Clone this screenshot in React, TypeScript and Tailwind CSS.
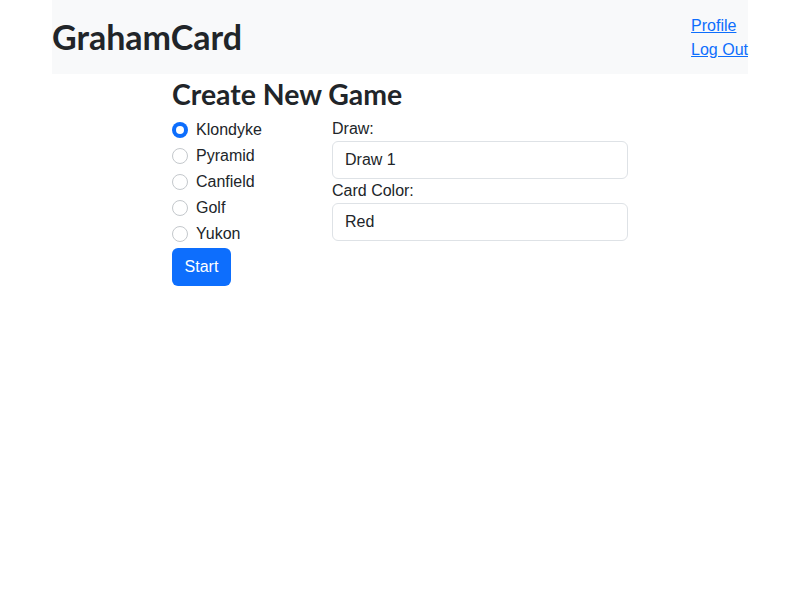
import React from "react";

const games = ["Klondyke", "Pyramid", "Canfield", "Golf", "Yukon"];

export default function App() {
  const [sel, setSel] = React.useState("Klondyke");
  return (
    <div className="min-h-[600px] bg-white text-[#212529] text-[16px] leading-6" style={{ fontFamily: '"Liberation Sans", Arial, sans-serif' }}>
      <header className="w-[696px] mx-auto h-[74px] bg-[#f8f9fa] flex items-center justify-between">
        <h1 className="m-0 text-[34px] leading-[41px] font-bold -mt-[2px]" style={{ fontFamily: 'Lato, "Liberation Sans", sans-serif' }}>GrahamCard</h1>
        <div className="flex flex-col items-start mt-[2px]">
          <a href="#" className="text-[#0d6efd] underline leading-6">Profile</a>
          <a href="#" className="text-[#0d6efd] underline leading-6">Log Out</a>
        </div>
      </header>
      <main className="pl-[172px] pt-[1px]">
        <h2 className="m-0 text-[28.4px] leading-[34px] font-bold pt-[2px] mb-[7px]" style={{ fontFamily: 'Lato, "Liberation Sans", sans-serif' }}>Create New Game</h2>
        <div className="flex">
          <div className="w-[160px] flex flex-col">
            {games.map((g) => (
              <label key={g} className="flex items-center h-6 mb-[2px] cursor-pointer" onClick={() => setSel(g)}>
                {sel === g ? (
                  <span className="w-4 h-4 rounded-full bg-[#0d6efd] flex items-center justify-center">
                    <span className="w-[8px] h-[8px] rounded-full bg-white" />
                  </span>
                ) : (
                  <span className="w-4 h-4 rounded-full border border-[#c4c8cc] bg-white" />
                )}
                <span className="ml-2">{g}</span>
              </label>
            ))}
            <button className="w-[59px] h-[38px] rounded-[6px] bg-[#0d6efd] text-white text-[16px]">Start</button>
          </div>
          <div className="w-[296px] flex flex-col -mt-[1px]">
            <div className="leading-6">Draw:</div>
            <div className="h-[38px] border border-[#dee2e6] rounded-[6px] px-3 flex items-center">Draw 1</div>
            <div className="leading-6">Card Color:</div>
            <div className="h-[38px] border border-[#dee2e6] rounded-[6px] px-3 flex items-center">Red</div>
          </div>
        </div>
      </main>
    </div>
  );
}
